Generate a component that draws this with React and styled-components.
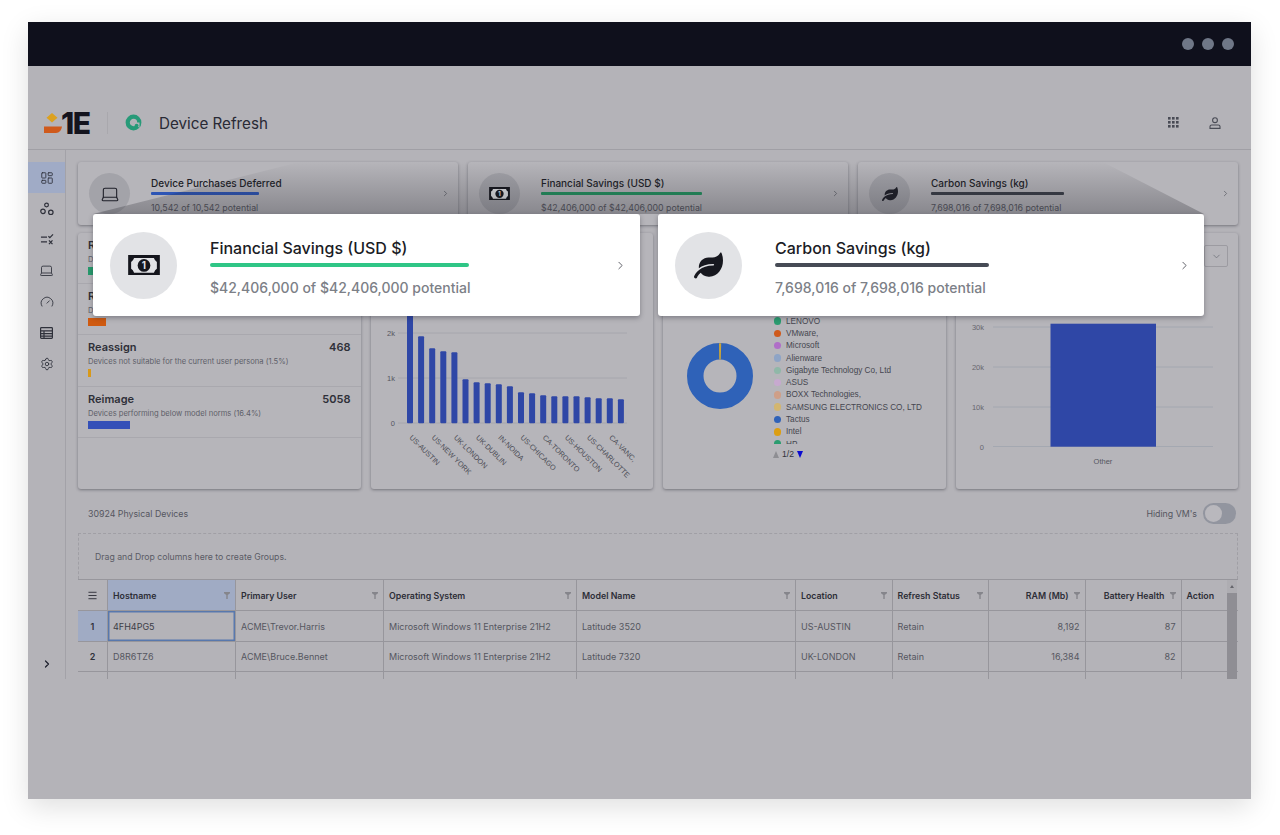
import React from 'react';
import styled, {createGlobalStyle} from 'styled-components';
import {ChevronDown, ChevronRight, Gauge, Laptop, LayoutDashboard, Menu, Settings} from 'lucide-react';
import {FaLeaf} from 'react-icons/fa';

const GlobalStyle = createGlobalStyle`
    html, body {
        margin: 0;
        background: #fff;
    }
    body {
        font-family: Inter, "Noto Sans", sans-serif;
        color: #2c2d36;
    }
    * {
        box-sizing: border-box;
    }
`;

const Page = styled.div`
    width: 1280px;
    height: 835px;
    padding: 22px 29px 0 28px;
    overflow: hidden;
`;

const Window = styled.div`
    position: relative;
    height: 777px;
    background: #b4b3b8;
    box-shadow: 0 8px 26px rgba(0, 0, 0, 0.13);
    display: flex;
    flex-direction: column;
`;

const TitleBar = styled.div`
    flex: 0 0 44px;
    background: #0f101c;
    display: flex;
    align-items: center;
    justify-content: flex-end;
    gap: 8px;
    padding-right: 17px;
`;

const Dot = styled.span`
    width: 12px;
    height: 12px;
    border-radius: 50%;
    background: #6f7787;
`;

const Viewport = styled.div`
    height: 613px;
    overflow: hidden;
    display: flex;
    flex-direction: column;
`;

const Header = styled.header`
    flex: 0 0 84px;
    display: flex;
    align-items: center;
    padding: 30px 30px 0 16px;
    border-bottom: 1px solid #a09fa5;
`;

const Logo = styled.div`
    display: flex;
    align-items: center;
    width: 48px;
    height: 22px;
`;

const LogoText = styled.span`
    font-size: 30px;
    font-weight: 800;
    letter-spacing: -1.5px;
    line-height: 22px;
    color: #14141e;
    margin-left: -1px;
`;

const HeaderDivider = styled.span`
    width: 1px;
    height: 22px;
    background: #a9a8ad;
    margin: 0 17px 0 15px;
`;

const AppTitle = styled.h1`
    margin: 1px 0 0 17px;
    font-size: 15.2px;
    font-weight: 400;
    color: #292a35;
`;

const HeaderIcons = styled.div`
    margin-left: auto;
    display: flex;
    align-items: center;
    gap: 30px;
    color: #494b55;
`;

const Shell = styled.div`
    flex: 1;
    display: flex;
    min-height: 0;
`;

const Sidebar = styled.nav`
    flex: 0 0 38px;
    border-right: 1px solid #a3a2a8;
    padding-top: 12px;
    display: flex;
    flex-direction: column;
    color: #2f313b;
`;

const SideItem = styled.div`
    height: 31px;
    width: 37px;
    flex: none;
    display: flex;
    align-items: center;
    justify-content: center;
    background: ${p => (p.$active ? '#a0abc6' : 'transparent')};
`;

const SideToggle = styled(SideItem)`
    margin-top: auto;
    height: 30px;
    color: #1c1e2c;
`;

const Main = styled.main`
    flex: 1;
    min-width: 0;
    padding: 12px 13px 0 12px;
    display: flex;
    flex-direction: column;
`;

const Card = styled.section`
    position: relative;
    background: #b6b5ba;
    border-radius: 3px;
    box-shadow: 0 1px 3px rgba(40, 40, 50, 0.45);
`;

const TopRow = styled.div`
    flex: none;
    display: grid;
    grid-template-columns: repeat(3, 1fr);
    gap: 10px;
`;

const StatCard = styled(Card)`
    height: 63px;
    display: flex;
    align-items: center;
    padding: 0 8px 0 11px;
`;

const IconCircle = styled.div`
    flex: none;
    width: 41px;
    height: 41px;
    border-radius: 50%;
    background: #a3a3a9;
    color: #1e1f28;
    display: flex;
    align-items: center;
    justify-content: center;
    margin-right: 21px;
`;

const StatBody = styled.div`
    flex: 1;
    min-width: 0;
    padding-top: 3px;
`;

const StatTitle = styled.div`
    font-size: 10px;
    font-weight: 500;
    line-height: 14px;
    white-space: nowrap;
    color: #1d1e27;
`;

const StatBar = styled.div`
    height: 2.5px;
    margin: 2px 0 7px;
    border-radius: 1px;
    background: ${p => p.$color};
`;

const StatSub = styled.div`
    font-size: 8.8px;
    line-height: 12px;
    white-space: nowrap;
    color: #55565f;
`;

const StatChevron = styled.div`
    flex: none;
    color: #5c5d66;
    display: flex;
    margin-top: -1px;
`;

const ChartRow = styled.div`
    flex: none;
    display: grid;
    grid-template-columns: repeat(4, 1fr);
    gap: 10px;
    margin-top: 8px;
`;

const ChartCard = styled(Card)`
    height: 256px;
    overflow: hidden;
`;

const ActionRow = styled.div`
    height: 51.2px;
    padding: 5px 10px 0;
    border-bottom: 1px solid #a9a8ae;
`;

const ActionHead = styled.div`
    display: flex;
    justify-content: space-between;
    font-size: 11px;
    font-weight: 600;
    line-height: 14px;
    color: #2f3039;
`;

const ActionText = styled.div`
    font-size: 7.6px;
    line-height: 10px;
    margin-top: 3px;
    color: #5e5f69;
    white-space: nowrap;
`;

const ActionBar = styled.div`
    height: 8px;
    margin-top: 2px;
    background: ${p => p.$color};
`;

const ChartSvg = styled.svg`
    display: block;
    font-family: "Liberation Sans", Arial, sans-serif;
`;

const DonutLayout = styled(ChartCard)`
    display: flex;
    align-items: flex-start;
`;

const DonutBox = styled.div`
    flex: none;
    margin: 110px 20px 0 24px;
    display: flex;
`;

const LegendBox = styled.div`
    padding-top: 82px;
    font-family: "Liberation Sans", Arial, sans-serif;
`;

const LegendList = styled.div`
    height: 129px;
    overflow: hidden;
`;

const LegendItem = styled.div`
    display: flex;
    align-items: center;
    height: 12.3px;
    font-size: 8.2px;
    white-space: nowrap;
    color: #45464f;
`;

const LegendDot = styled.span`
    width: 7.5px;
    height: 7.5px;
    border-radius: 50%;
    margin-right: 5px;
    margin-left: 0.5px;
    background: ${p => p.$color};
`;

const Pager = styled.div`
    display: flex;
    align-items: center;
    gap: 3px;
    margin-top: 5px;
    font-size: 8.6px;
    color: #33343c;
`;

const PagerArrow = styled.span`
    width: 0;
    height: 0;
    border-left: 3.5px solid transparent;
    border-right: 3.5px solid transparent;
    ${p => (p.$down ? 'border-top: 7px solid #0a0ad0;' : 'border-bottom: 7px solid #8e8e93;')}
`;

const SelectStub = styled.div`
    position: absolute;
    top: 12px;
    right: 10px;
    width: 24px;
    height: 22px;
    border: 1px solid #9c9ba1;
    border-radius: 2px;
    display: flex;
    align-items: center;
    justify-content: center;
    color: #686973;
`;

const GridToolbar = styled.div`
    flex: none;
    height: 44px;
    display: flex;
    align-items: center;
    justify-content: space-between;
    padding: 5px 2px 0 10px;
    font-size: 8.8px;
    color: #55565f;
`;

const ToggleWrap = styled.div`
    display: flex;
    align-items: center;
    gap: 6px;
`;

const Toggle = styled.div`
    width: 33px;
    height: 21px;
    padding: 2px;
    border-radius: 11px;
    background: #92959f;
`;

const ToggleKnob = styled.div`
    width: 17px;
    height: 17px;
    border-radius: 50%;
    background: #b9b8bd;
`;

const GroupPanel = styled.div`
    height: 46px;
    flex: none;
    display: flex;
    align-items: center;
    padding: 0 0 0 16px;
    border: 1px dashed #a09fa5;
    border-bottom: none;
    font-size: 8.7px;
    color: #5a5b65;
`;

const TableWrap = styled.div`
    position: relative;
    flex: none;
    border-top: 1px solid #97969c;
`;

const TableRow = styled.div`
    display: grid;
    grid-template-columns: 30px 128px 148px 193px 219px 96.5px 96.5px 96.5px 96px 46px;
    height: ${p => p.$height}px;
    border-bottom: 1px solid #97969c;
`;

const HeadCell = styled.div`
    display: flex;
    align-items: center;
    justify-content: ${p => (p.$right ? 'flex-end' : 'space-between')};
    gap: 5px;
    padding: 0 5px;
    font-size: 8.8px;
    font-weight: 600;
    color: #2d2e37;
    border-right: 1px solid #97969c;
    background: ${p => (p.$active ? '#a0abc4' : 'transparent')};
    white-space: nowrap;
    &:last-child {
        border-right: none;
    }
`;

const MenuCell = styled(HeadCell)`
    justify-content: center;
    padding: 0;
`;

const BodyCell = styled.div`
    display: flex;
    align-items: center;
    justify-content: ${p => (p.$right ? 'flex-end' : 'flex-start')};
    padding: 0 5px;
    font-size: 9px;
    color: #55565f;
    border-right: 1px solid #97969c;
    white-space: nowrap;
    ${p => p.$focus && 'box-shadow: inset 0 0 0 1.5px #5878ad; color: #3c3d46;'}
    &:last-child {
        border-right: none;
    }
`;

const IndexCell = styled(BodyCell)`
    justify-content: center;
    padding: 0;
    font-weight: 600;
    color: #2f3039;
    background: ${p => (p.$active ? '#a0abc4' : 'transparent')};
`;

const ScrollBar = styled.div`
    position: absolute;
    top: 0;
    right: 1px;
    bottom: -60px;
    width: 10px;
    background: #aeadb2;
    padding-top: 13px;
`;

const ScrollUp = styled.span`
    position: absolute;
    top: 5px;
    left: 3px;
    border-left: 2px solid transparent;
    border-right: 2px solid transparent;
    border-bottom: 3px solid #66666c;
`;

const ScrollThumb = styled.div`
    height: 100%;
    background: #8f8e94;
`;

const Spotlight = styled.div`
    position: absolute;
    left: 65px;
    top: 140px;
    width: 1111px;
    height: 52px;
    clip-path: polygon(18.6% 0, 90.9% 0, 100% 100%, 0 100%);
    background: linear-gradient(to bottom, rgba(30, 30, 38, 0), rgba(30, 30, 38, 0.3));
    pointer-events: none;
`;

const PopupRow = styled.div`
    position: absolute;
    left: 65px;
    top: 192px;
    display: flex;
    gap: 18px;
`;

const Popup = styled.div`
    width: ${p => p.$width}px;
    height: 102px;
    background: #fff;
    border-radius: 3px;
    box-shadow: 0 2px 5px rgba(30, 30, 40, 0.35);
    display: flex;
    align-items: center;
    padding: 0 13px 0 17px;
`;

const PopupCircle = styled.div`
    flex: none;
    width: 67px;
    height: 67px;
    border-radius: 50%;
    background: #e2e3e6;
    color: #17181f;
    display: flex;
    align-items: center;
    justify-content: center;
    margin-right: 33px;
`;

const PopupBody = styled.div`
    flex: 1;
    min-width: 0;
    padding-top: 5px;
`;

const PopupTitle = styled.div`
    font-size: 16px;
    font-weight: 500;
    line-height: 22px;
    color: #1b1c25;
    white-space: nowrap;
`;

const PopupBar = styled.div`
    width: ${p => p.$width}px;
    height: 4px;
    margin: 4px 0 11px;
    border-radius: 2px;
    background: ${p => p.$color};
`;

const PopupSub = styled.div`
    font-size: 14px;
    font-weight: 500;
    line-height: 20px;
    color: #7c8087;
    white-space: nowrap;
`;

const PopupChevron = styled.div`
    flex: none;
    display: flex;
    color: #4a4b55;
`;

const BillIcon = ({size}) => (
    <svg width={size} height={size * 0.65} viewBox="0 0 32 21">
        <rect width="32" height="21" fill="#15161d"/>
        <path d="M6 3h20q1 3 3 4v7q-2 1-3 4H6q-1-3-3-4V7q2-1 3-4z" fill="#e2e3e6"/>
        <circle cx="16" cy="10.5" r="6.4" fill="#15161d"/>
        <text x="16" y="14" textAnchor="middle" fontSize="10" fontWeight="700" fill="#e2e3e6" fontFamily="Inter, sans-serif">1</text>
    </svg>
);

const CirclesIcon = () => (
    <svg width="14" height="14" viewBox="0 0 15 15" fill="none" stroke="currentColor" strokeWidth="1.3">
        <circle cx="7" cy="3.2" r="2"/>
        <circle cx="3.2" cy="10" r="2.4"/>
        <circle cx="11.6" cy="11" r="2.4"/>
    </svg>
);

const ChecklistIcon = () => (
    <svg width="14" height="13" viewBox="0 0 15 14" fill="none" stroke="currentColor" strokeWidth="1.3">
        <path d="M1 4.5h6.5M1 9.5h6.5M9 3.5l1.6 1.6L14 1.5M9.6 8l3.8 4M13.4 8l-3.8 4"/>
    </svg>
);

const TableIcon = () => (
    <svg width="13" height="12" viewBox="0 0 13 12" fill="none" stroke="currentColor" strokeWidth="1.2">
        <rect x="0.6" y="0.6" width="11.8" height="10.8" rx="0.8"/>
        <path d="M0.6 3.8h11.8M0.6 6.6h11.8M0.6 9.2h11.8M4 3.8v7.6"/>
    </svg>
);

const DotsIcon = () => (
    <svg width="11" height="11" viewBox="0 0 11 11" fill="currentColor">
        {[0, 4, 8].map(y => [0, 4, 8].map(x => <rect key={`${x}-${y}`} x={x} y={y} width="2.6" height="2.6"/>))}
    </svg>
);

const UserIcon = () => (
    <svg width="12" height="12" viewBox="0 0 12 12" fill="none" stroke="currentColor" strokeWidth="1.1">
        <circle cx="6" cy="3.2" r="2.4"/>
        <path d="M1 11.4V9.6q0-1.6 1.7-1.6h6.6q1.7 0 1.7 1.6v1.8z"/>
    </svg>
);

const RefreshLogo = () => (
    <svg width="17" height="17" viewBox="0 0 17 17" fill="none">
        <circle cx="8.5" cy="8.5" r="5.8" stroke="#279a78" strokeWidth="4.2"/>
        <path d="M9 8.5l5.5 0 0 5.500z" fill="#b4b3b8"/>
        <circle cx="11.6" cy="11.6" r="1.9" fill="#279a78"/>
    </svg>
);

const FilterIcon = () => (
    <svg width="6" height="7" viewBox="0 0 6 7" fill="#85858b">
        <path d="M0 0h6v1.2L3.7 3v4H2.3V3L0 1.2z"/>
    </svg>
);

const stats = [
    {title: 'Device Purchases Deferred', sub: '10,542 of 10,542 potential', color: '#2d55b5', bar: 108, icon: <Laptop size={20} strokeWidth={1.3}/>},
    {title: 'Financial Savings (USD $)', sub: '$42,406,000 of $42,406,000 potential', color: '#23915f', bar: 161, icon: <BillIcon size={21}/>},
    {title: 'Carbon Savings (kg)', sub: '7,698,016 of 7,698,016 potential', color: '#3a3e48', bar: 133, icon: <FaLeaf size={16}/>},
];

const actions = [
    {title: 'Retain', value: '24952', text: 'Devices meeting all performance needs (80.7%)', color: '#279a6c', width: 18},
    {title: 'Replace', value: '446', text: 'Devices that are due for replacement (1.4%)', color: '#cf5a10', width: 18},
    {title: 'Reassign', value: '468', text: 'Devices not suitable for the current user persona (1.5%)', color: '#d8991a', width: 2.5},
    {title: 'Reimage', value: '5058', text: 'Devices performing below model norms (16.4%)', color: '#3450b8', width: 42},
];

const barHeights = [110, 87, 75, 72, 71, 44, 41, 40, 39, 37, 31, 30, 28, 27, 27, 27, 26, 25, 25, 24];
const barLabels = ['US-AUSTIN', 'US-NEW YORK', 'UK-LONDON', 'UK-DUBLIN', 'IN-NOIDA', 'US-CHICAGO', 'CA-TORONTO', 'US-HOUSTON', 'US-CHARLOTTE', 'CA-VANC,'];

const legend = [
    ['LENOVO', '#2b9c70'],
    ['VMware,', '#cf5a1c'],
    ['Microsoft', '#b06fc8'],
    ['Alienware', '#8ea4c6'],
    ['Gigabyte Technology Co, Ltd', '#90b8a8'],
    ['ASUS', '#c7a9cf'],
    ['BOXX Technologies,', '#cf9f88'],
    ['SAMSUNG ELECTRONICS CO, LTD', '#d3b670'],
    ['Tactus', '#2f62b8'],
    ['Intel', '#dc9e12'],
    ['HP', '#2b9c70'],
];

const columns = [
    {name: 'Hostname', active: true},
    {name: 'Primary User'},
    {name: 'Operating System'},
    {name: 'Model Name'},
    {name: 'Location'},
    {name: 'Refresh Status'},
    {name: 'RAM (Mb)', right: true},
    {name: 'Battery Health', right: true},
];

const rows = [
    ['4FH4PG5', 'ACME\\Trevor.Harris', 'Microsoft Windows 11 Enterprise 21H2', 'Latitude 3520', 'US-AUSTIN', 'Retain', '8,192', '87'],
    ['D8R6TZ6', 'ACME\\Bruce.Bennet', 'Microsoft Windows 11 Enterprise 21H2', 'Latitude 7320', 'UK-LONDON', 'Retain', '16,384', '82'],
    ['', '', '', '', '', '', '', ''],
];

const LocationChart = () => (
    <ChartSvg width="282" height="256" viewBox="0 0 282 256">
        {[[100, '2k'], [145, '1k'], [190, '0']].map(([y, label]) => (
            <g key={label}>
                <line x1="27" x2="256" y1={y} y2={y} stroke="#a2a3ab" strokeWidth="0.8"/>
                <text x="24" y={y + 3} textAnchor="end" fontSize="7.5" fill="#55565f">{label}</text>
            </g>
        ))}
        {barHeights.map((h, i) => (
            <rect key={i} x={36 + i * 11.1} y={190.3 - h} width="6" height={h} rx="1" fill="#2f47a6"/>
        ))}
        {barLabels.map((label, i) => {
            const x = 38 + i * 22.2;
            return (
                <text key={label} x={x} y="205" transform={`rotate(45 ${x} 205)`} fontSize="7.3" fill="#4d4e57">{label}</text>
            );
        })}
    </ChartSvg>
);

const ModelChart = () => (
    <ChartSvg width="282" height="256" viewBox="0 0 282 256">
        {[[94, '30k'], [134, '20k'], [174, '10k'], [213.5, '0']].map(([y, label]) => (
            <g key={label}>
                <line x1="37" x2="257" y1={y} y2={y} stroke="#a0a4ae" strokeWidth="0.8"/>
                <text x="28" y={y + 3} textAnchor="end" fontSize="7.5" fill="#66676f">{label}</text>
            </g>
        ))}
        <rect x="94.5" y="90.7" width="105.5" height="123" fill="#2f47a6"/>
        <text x="147" y="231" textAnchor="middle" fontSize="7.5" fill="#55565f">Other</text>
    </ChartSvg>
);

const Donut = () => (
    <svg width="66" height="66" viewBox="0 0 66 66" fill="none">
        <circle cx="33" cy="33" r="24.75" stroke="#2f62b8" strokeWidth="16.5"/>
        <path d="M32 0.2h2.2L33.8 16.5h-1.6z" fill="#c9a43a"/>
    </svg>
);

export default function App() {
    return (
        <Page>
            <GlobalStyle/>
            <Window>
                <TitleBar>
                    <Dot/>
                    <Dot/>
                    <Dot/>
                </TitleBar>
                <Viewport>
                    <Header>
                        <Logo>
                            <svg width="18" height="21" viewBox="0 0 18 21">
                                <path d="M8 1l5.5 4.8L8 10.6 2.5 5.800z" fill="#dca11f"/>
                                <path d="M0 14.5h18q-1 6.5-6 6.500H0z" fill="#cf5a1c"/>
                            </svg>
                            <LogoText>1E</LogoText>
                        </Logo>
                        <HeaderDivider/>
                        <RefreshLogo/>
                        <AppTitle>Device Refresh</AppTitle>
                        <HeaderIcons>
                            <DotsIcon/>
                            <UserIcon/>
                        </HeaderIcons>
                    </Header>
                    <Shell>
                        <Sidebar>
                            <SideItem $active><LayoutDashboard size={14} strokeWidth={1.5}/></SideItem>
                            <SideItem><CirclesIcon/></SideItem>
                            <SideItem><ChecklistIcon/></SideItem>
                            <SideItem><Laptop size={15} strokeWidth={1.4}/></SideItem>
                            <SideItem><Gauge size={14} strokeWidth={1.5}/></SideItem>
                            <SideItem><TableIcon/></SideItem>
                            <SideItem><Settings size={14} strokeWidth={1.5}/></SideItem>
                            <SideToggle><ChevronRight size={12} strokeWidth={2.4}/></SideToggle>
                        </Sidebar>
                        <Main>
                            <TopRow>
                                {stats.map(stat => (
                                    <StatCard key={stat.title}>
                                        <IconCircle>{stat.icon}</IconCircle>
                                        <StatBody>
                                            <StatTitle>{stat.title}</StatTitle>
                                            <StatBar $color={stat.color} style={{width: stat.bar}}/>
                                            <StatSub>{stat.sub}</StatSub>
                                        </StatBody>
                                        <StatChevron><ChevronRight size={9} strokeWidth={2}/></StatChevron>
                                    </StatCard>
                                ))}
                            </TopRow>
                            <ChartRow>
                                <ChartCard>
                                    {actions.map(action => (
                                        <ActionRow key={action.title}>
                                            <ActionHead>
                                                <span>{action.title}</span>
                                                <span>{action.value}</span>
                                            </ActionHead>
                                            <ActionText>{action.text}</ActionText>
                                            <ActionBar $color={action.color} style={{width: action.width}}/>
                                        </ActionRow>
                                    ))}
                                </ChartCard>
                                <ChartCard>
                                    <LocationChart/>
                                </ChartCard>
                                <DonutLayout>
                                    <DonutBox><Donut/></DonutBox>
                                    <LegendBox>
                                        <LegendList>
                                            {legend.map(([name, color]) => (
                                                <LegendItem key={name}>
                                                    <LegendDot $color={color}/>
                                                    {name}
                                                </LegendItem>
                                            ))}
                                        </LegendList>
                                        <Pager>
                                            <PagerArrow/>
                                            <span>1/2</span>
                                            <PagerArrow $down/>
                                        </Pager>
                                    </LegendBox>
                                </DonutLayout>
                                <ChartCard>
                                    <SelectStub><ChevronDown size={11} strokeWidth={1.5}/></SelectStub>
                                    <ModelChart/>
                                </ChartCard>
                            </ChartRow>
                            <GridToolbar>
                                <span>30924 Physical Devices</span>
                                <ToggleWrap>
                                    <span>Hiding VM's</span>
                                    <Toggle><ToggleKnob/></Toggle>
                                </ToggleWrap>
                            </GridToolbar>
                            <GroupPanel>Drag and Drop columns here to create Groups.</GroupPanel>
                            <TableWrap>
                                <TableRow $height={31}>
                                    <MenuCell><Menu size={11} strokeWidth={2}/></MenuCell>
                                    {columns.map(col => (
                                        <HeadCell key={col.name} $active={col.active} $right={col.right}>
                                            <span>{col.name}</span>
                                            <FilterIcon/>
                                        </HeadCell>
                                    ))}
                                    <HeadCell>Action</HeadCell>
                                </TableRow>
                                {rows.map((row, r) => (
                                    <TableRow key={r} $height={r === 0 ? 31 : 30}>
                                        <IndexCell $active={r === 0}>{row[0] ? r + 1 : ''}</IndexCell>
                                        {row.map((value, c) => (
                                            <BodyCell key={c} $right={columns[c].right} $focus={r === 0 && c === 0}>{value}</BodyCell>
                                        ))}
                                        <BodyCell/>
                                    </TableRow>
                                ))}
                                <ScrollBar>
                                    <ScrollUp/>
                                    <ScrollThumb/>
                                </ScrollBar>
                            </TableWrap>
                        </Main>
                    </Shell>
                </Viewport>
                <Spotlight/>
                <PopupRow>
                    <Popup $width={547}>
                        <PopupCircle><BillIcon size={32}/></PopupCircle>
                        <PopupBody>
                            <PopupTitle>Financial Savings (USD $)</PopupTitle>
                            <PopupBar $color="#2fc686" $width={259}/>
                            <PopupSub>$42,406,000 of $42,406,000 potential</PopupSub>
                        </PopupBody>
                        <PopupChevron><ChevronRight size={13} strokeWidth={1.6}/></PopupChevron>
                    </Popup>
                    <Popup $width={546}>
                        <PopupCircle><FaLeaf size={29}/></PopupCircle>
                        <PopupBody>
                            <PopupTitle>Carbon Savings (kg)</PopupTitle>
                            <PopupBar $color="#464b55" $width={214}/>
                            <PopupSub>7,698,016 of 7,698,016 potential</PopupSub>
                        </PopupBody>
                        <PopupChevron><ChevronRight size={13} strokeWidth={1.6}/></PopupChevron>
                    </Popup>
                </PopupRow>
            </Window>
        </Page>
    );
}
